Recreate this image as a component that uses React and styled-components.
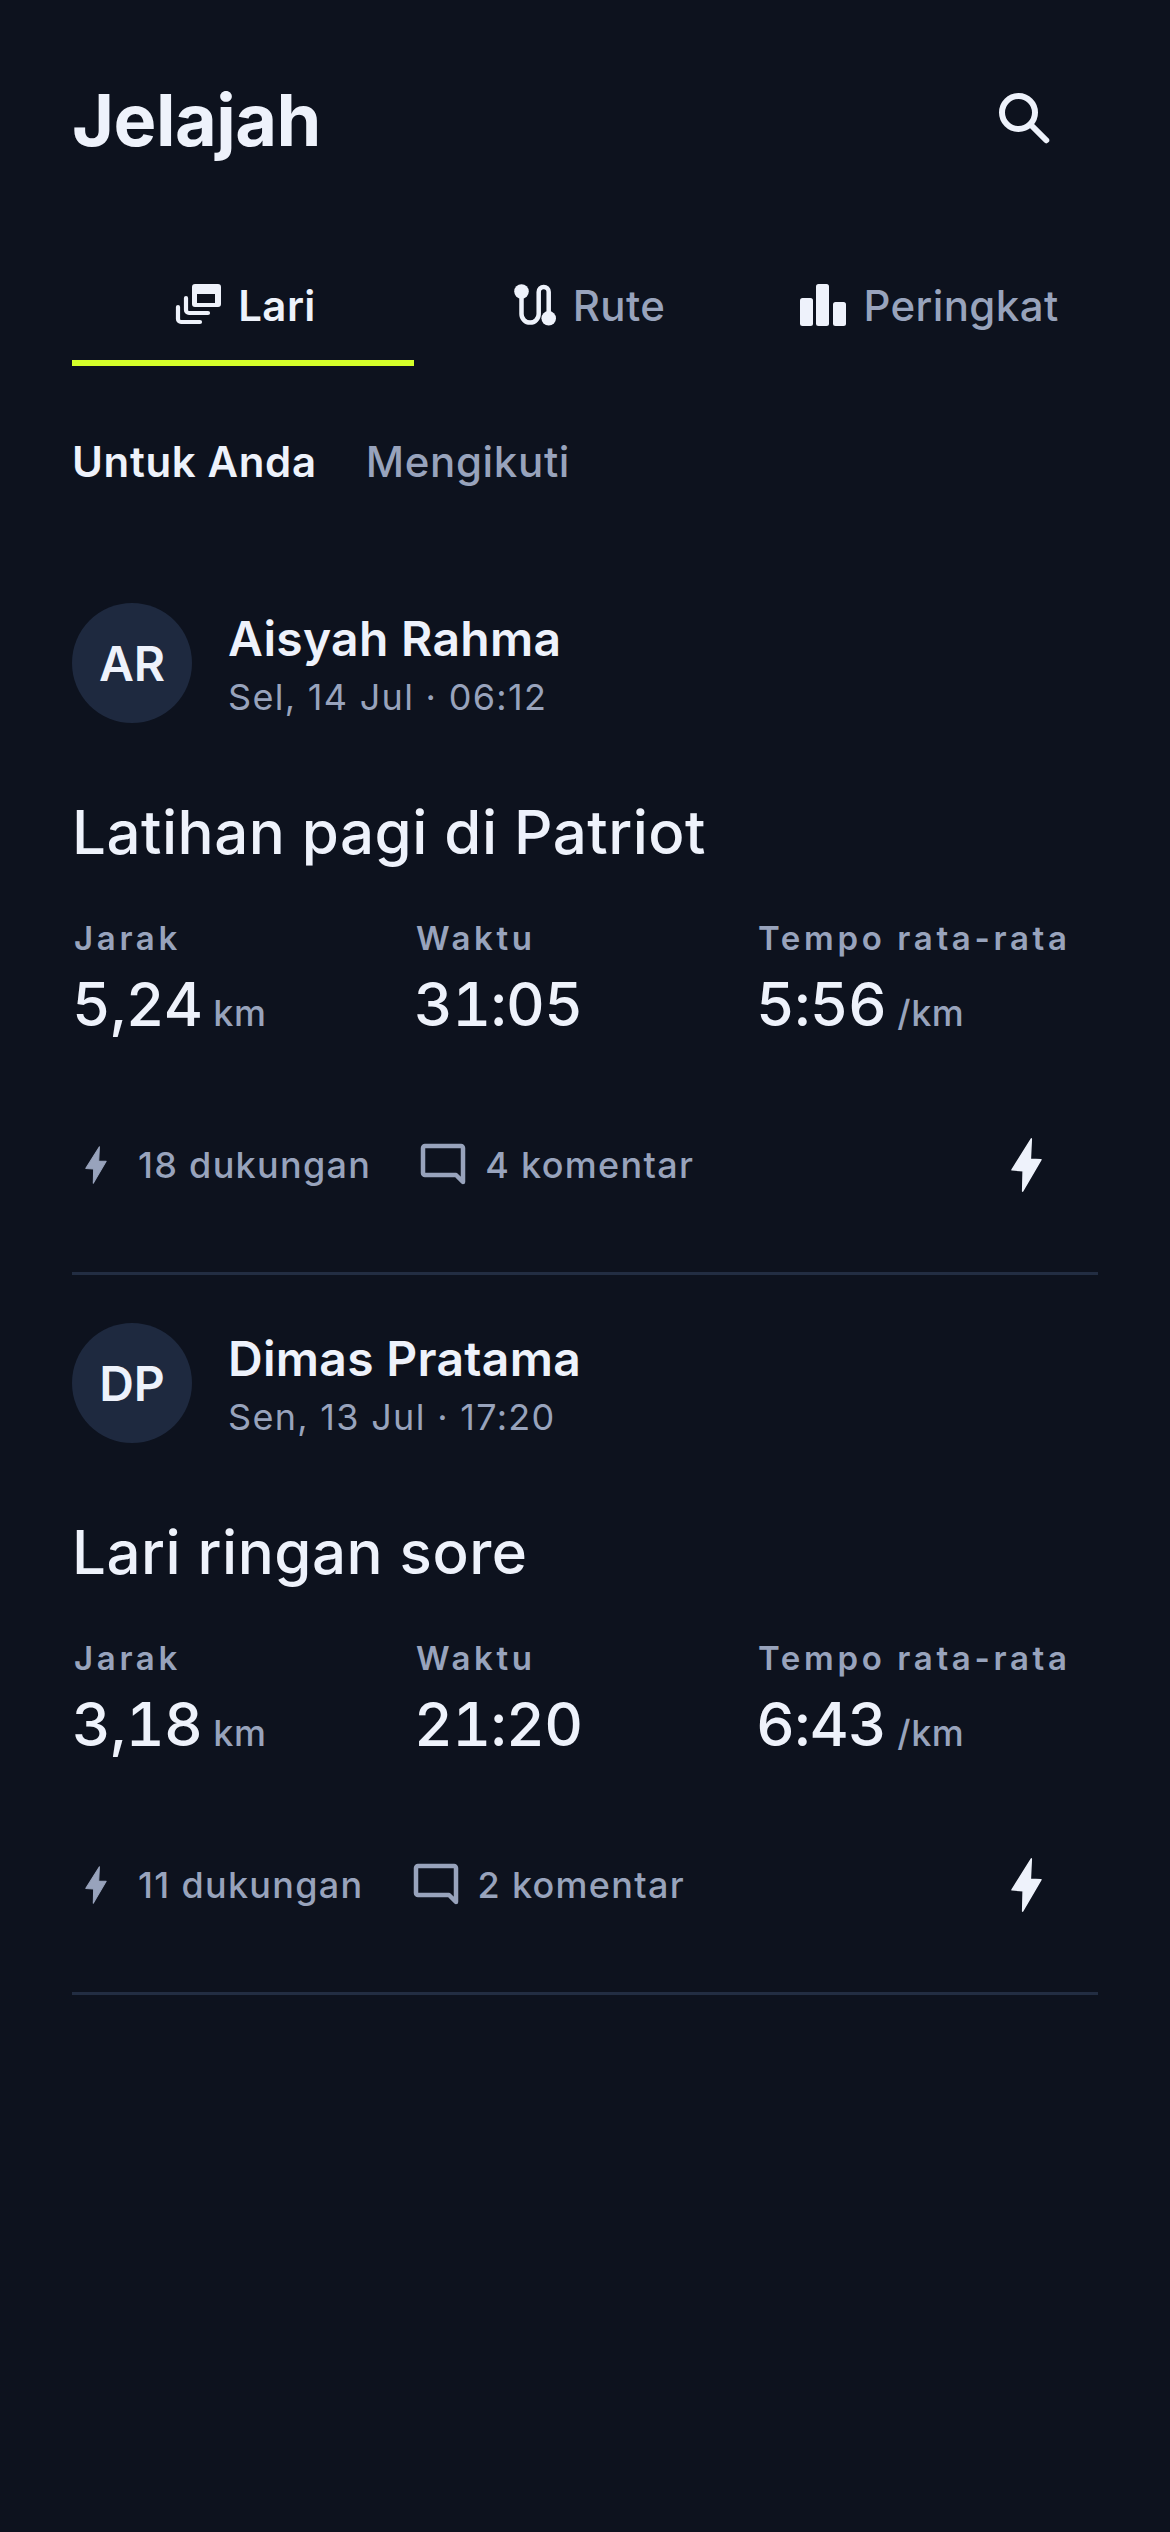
import React from "react";
import styled, { createGlobalStyle } from "styled-components";

const Global = createGlobalStyle`
  html, body { margin: 0; padding: 0; background: #0d121e; }
  * { box-sizing: border-box; }
`;
const BODY = `"Inter", "Liberation Sans", sans-serif`;
const LIGHT = "#eef2fb";
const MUTED = "#98a3bc";

const Page = styled.div`
  width: 1170px; min-height: 2532px; background: #0d121e; padding: 48px 72px 0;
  font-family: ${BODY}; color: ${LIGHT};
`;
const Header = styled.header`
  display: flex; align-items: center; justify-content: space-between; height: 144px;
`;
const Title = styled.h1`
  margin: 0; font: 700 72px/1 ${BODY}; letter-spacing: -0.5px; color: ${LIGHT};
`;
const IconButton = styled.div`
  width: 144px; height: 144px; display: flex; align-items: center; justify-content: center;
`;
const Tabs = styled.nav`
  display: grid; grid-template-columns: repeat(3, 1fr); margin-top: 48px;
`;
const Tab = styled.div`
  height: 126px; display: flex; align-items: center; justify-content: center; gap: 15px;
  padding: 10px 0 0 5px; font-size: 42px; letter-spacing: 0.4px; font-weight: ${p => (p.$active ? 600 : 500)};
  color: ${p => (p.$active ? LIGHT : MUTED)};
  border-bottom: 6px solid ${p => (p.$active ? "#d4ff2a" : "transparent")};
`;
const SubTabs = styled.div`
  display: flex; gap: 49px; margin-top: 65px; height: 60px; align-items: center;
`;
const SubTab = styled.div`
  font-size: 42px; letter-spacing: 0.65px; font-weight: ${p => (p.$active ? 600 : 500)};
  color: ${p => (p.$active ? LIGHT : MUTED)};
`;
const Feed = styled.div`margin-top: 112px;`;
const Card = styled.article`
  padding-top: 48px; padding-bottom: 35px; border-bottom: 3px solid #222d42;
  &:first-child { padding-top: 0; }
`;
const Person = styled.div`display: flex; align-items: center; gap: 36px; height: 120px;`;
const Avatar = styled.div`
  width: 120px; height: 120px; border-radius: 50%; background: #1e293f;
  display: flex; align-items: center; justify-content: center;
  font-size: 48px; font-weight: 600; color: ${LIGHT};
`;
const PersonText = styled.div`display: flex; flex-direction: column; padding-top: 7px;`;
const Name = styled.div`font-size: 48px; font-weight: 600; line-height: 60px; letter-spacing: 0.3px;`;
const Meta = styled.div`font-size: 36px; line-height: 54px; color: ${MUTED}; letter-spacing: 1.3px; margin-top: 1px;`;
const ActivityTitle = styled.h2`
  margin: 67px 0 0; font: 500 60px/84px ${BODY}; letter-spacing: 0.5px; color: ${LIGHT};
`;
const Stats = styled.div`display: grid; grid-template-columns: repeat(3, 1fr); margin-top: 43px;`;
const Stat = styled.div`display: flex; flex-direction: column;`;
const Label = styled.div`
  font-size: 33px; line-height: 42px; font-weight: 600; letter-spacing: 3.65px; color: ${MUTED}; padding-left: 2px;
`;
const Value = styled.div`
  display: flex; align-items: baseline; gap: 11px; margin-top: 3px;
  font: 500 60px/84px ${BODY}; font-variant-numeric: tabular-nums; letter-spacing: -0.6px; color: ${LIGHT};
`;
const Unit = styled.span`font: 500 36px/1 ${BODY}; letter-spacing: 0.5px; color: ${MUTED};`;
const Footer = styled.div`
  display: flex; align-items: center; justify-content: space-between; margin-top: 47px; height: 144px;
`;
const Counts = styled.div`display: flex; align-items: center; gap: 48px;`;
const Count = styled.div`
  display: flex; align-items: center; gap: 18px; font-size: 36px; font-weight: 500;
  letter-spacing: 1.3px; color: ${MUTED};
`;

const Icon = ({ size = 48, children, fill = "none" }) => (
  <svg width={size} height={size} viewBox="0 0 48 48" fill={fill}>{children}</svg>
);
const SearchIcon = () => (
  <Icon size={72}>
    <circle cx="19" cy="19" r="11" stroke={LIGHT} strokeWidth="4" />
    <path d="M28.5 28.5 37.5 37.5" stroke={LIGHT} strokeWidth="4" strokeLinecap="round" />
  </Icon>
);
const RunsIcon = () => (
  <Icon>
    <path fillRule="evenodd" d="M20 3h23a3 3 0 0 1 3 3v17a3 3 0 0 1-3 3H20a3 3 0 0 1-3-3V6a3 3 0 0 1 3-3Zm2 10v9h18v-9H22Z" fill={LIGHT} />
    <path d="M11 17v12a3 3 0 0 0 3 3h19" stroke={LIGHT} strokeWidth="4.2" strokeLinecap="round" />
    <path d="M3 26v12a3 3 0 0 0 3 3h19" stroke={LIGHT} strokeWidth="4.2" strokeLinecap="round" />
  </Icon>
);
const RouteIcon = () => (
  <Icon>
    <circle cx="11.5" cy="10.5" r="7.3" fill={LIGHT} />
    <circle cx="38.7" cy="37.3" r="7.3" fill={LIGHT} />
    <path d="M11.5 10v23A8.6 8.6 0 0 0 28.7 33V11a5 5 0 0 1 10 0v26" stroke={LIGHT} strokeWidth="4.5" strokeLinecap="round" />
  </Icon>
);
const BarsIcon = () => (
  <Icon fill={LIGHT}>
    <rect x="0" y="17" width="13" height="28" rx="2.5" />
    <rect x="16" y="3" width="13" height="42" rx="2.5" />
    <rect x="33" y="21" width="13" height="24" rx="2.5" />
  </Icon>
);
const Bolt = ({ width, height, color }) => (
  <svg width={width} height={height} viewBox="-1 -1 32 56">
    <path d="M20 0 19 21 30 21.5 11 54 11.5 33 0 32Z" fill={color} stroke={color} strokeWidth="1.5" strokeLinejoin="round" />
  </svg>
);
const CommentIcon = () => (
  <Icon>
    <path d="M6 5h36a2 2 0 0 1 2 2v34l-7-7H6a2 2 0 0 1-2-2V7a2 2 0 0 1 2-2Z" stroke={MUTED} strokeWidth="4.5" strokeLinejoin="round" />
  </Icon>
);

const posts = [
  { initials: "AR", name: "Aisyah Rahma", meta: "Sel, 14 Jul · 06:12", title: "Latihan pagi di Patriot", dist: "5,24", time: "31:05", pace: "5:56", likes: "18 dukungan", comments: "4 komentar" },
  { initials: "DP", name: "Dimas Pratama", meta: "Sen, 13 Jul · 17:20", title: "Lari ringan sore", dist: "3,18", time: "21:20", pace: "6:43", likes: "11 dukungan", comments: "2 komentar" },
];

export default function App() {
  return (
    <Page>
      <Global />
      <Header>
        <Title>Jelajah</Title>
        <IconButton><SearchIcon /></IconButton>
      </Header>
      <Tabs>
        <Tab $active><RunsIcon />Lari</Tab>
        <Tab><RouteIcon />Rute</Tab>
        <Tab><BarsIcon />Peringkat</Tab>
      </Tabs>
      <SubTabs>
        <SubTab $active>Untuk Anda</SubTab>
        <SubTab>Mengikuti</SubTab>
      </SubTabs>
      <Feed>
        {posts.map(p => (
          <Card key={p.initials}>
            <Person>
              <Avatar>{p.initials}</Avatar>
              <PersonText>
                <Name>{p.name}</Name>
                <Meta>{p.meta}</Meta>
              </PersonText>
            </Person>
            <ActivityTitle>{p.title}</ActivityTitle>
            <Stats>
              <Stat><Label>Jarak</Label><Value>{p.dist}<Unit>km</Unit></Value></Stat>
              <Stat><Label>Waktu</Label><Value>{p.time}</Value></Stat>
              <Stat><Label>Tempo rata-rata</Label><Value>{p.pace}<Unit>/km</Unit></Value></Stat>
            </Stats>
            <Footer>
              <Counts>
                <Count><Bolt width={48} height={38} color={MUTED} />{p.likes}</Count>
                <Count><CommentIcon />{p.comments}</Count>
              </Counts>
              <IconButton><Bolt width={31} height={56} color={LIGHT} /></IconButton>
            </Footer>
          </Card>
        ))}
      </Feed>
    </Page>
  );
}
